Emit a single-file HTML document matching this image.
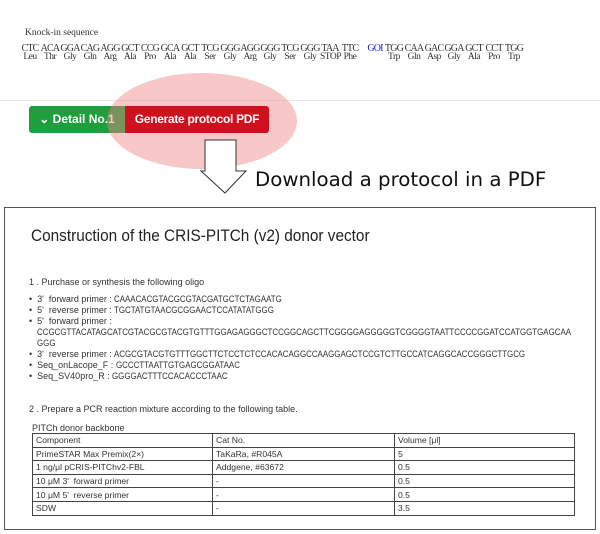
<!DOCTYPE html>
<html><head><meta charset="utf-8"><style>
body{margin:0;width:600px;height:534px;background:#fff;position:relative;overflow:hidden;font-family:"Liberation Sans",sans-serif}
.a{position:absolute;white-space:nowrap}
.sq{font-family:"Liberation Serif",serif;font-size:10px;color:#333;line-height:8px;letter-spacing:-0.8px}
.sq span{font-size:9.5px;letter-spacing:-0.5px}
.s{font-size:9px;color:#333}
.q{display:inline-block;transform-origin:left top;transform:scaleX(0.88)}
table{position:absolute;left:32px;top:433px;width:543px;border-collapse:collapse;font-size:8.6px;color:#333}
td{border:1px solid #444;height:12.6px;padding:0 0 0 3px;line-height:12px}
</style></head><body>
<div class="a" style="left:25px;top:28px;font-family:'Liberation Serif',serif;font-size:9.5px;color:#333">Knock-in sequence</div>
<div id="seq"></div>
<div class="a" style="left:0;top:100px;width:600px;height:1px;background:#e8e8e8"></div>
<div class="a" style="left:29px;top:106px;width:96px;height:27px;background:#1e9e3c;border-radius:3px 0 0 3px;color:#fff;font-size:12px;font-weight:bold;line-height:27px;text-align:center">⌄ Detail No.1</div>
<div class="a" style="left:107px;top:73px;width:190px;height:96px;border-radius:50%;background:rgba(240,130,130,0.45)"></div>
<div class="a" style="left:125px;top:106px;width:144px;height:27px;background:#d0101e;border-radius:0 3px 3px 0;color:#fff;font-size:12px;font-weight:bold;line-height:27px;text-align:center;letter-spacing:-0.3px">Generate protocol PDF</div>
<svg class="a" style="left:0;top:0" width="600" height="200"><path d="M205 140H236V171H246L225 193L201 171H205Z" fill="#fff" stroke="#333" stroke-width="1"/></svg>
<div class="a" style="left:255px;top:168px;font-family:'DejaVu Sans',sans-serif;font-size:19.8px;color:#111">Download a protocol in a PDF</div>
<div class="a" style="left:4px;top:207px;width:590px;height:321px;border:1px solid #555"></div>
<div class="a" style="left:31px;top:227px;font-size:16.5px;color:#222;transform-origin:left top;transform:scaleX(0.93)">Construction of the CRIS-PITCh (v2) donor vector</div>
<div class="a s" style="left:29px;top:277px">1 . Purchase or synthesis the following oligo</div>
<div class="a s" style="left:29px;top:294px">•&nbsp; 3'&nbsp; forward primer : <span class="q">CAAACACGTACGCGTACGATGCTCTAGAATG</span></div>
<div class="a s" style="left:29px;top:305px">•&nbsp; 5'&nbsp; reverse primer : <span class="q">TGCTATGTAACGCGGAACTCCATATATGGG</span></div>
<div class="a s" style="left:29px;top:316px">•&nbsp; 5'&nbsp; forward primer :</div>
<div class="a s" style="left:37px;top:327px"><span class="q">CCGCGTTACATAGCATCGTACGCGTACGTGTTTGGAGAGGGCTCCGGCAGCTTCGGGGAGGGGGTCGGGGTAATTCCCCGGATCCATGGTGAGCAA</span></div>
<div class="a s" style="left:37px;top:338px"><span class="q">GGG</span></div>
<div class="a s" style="left:29px;top:349px">•&nbsp; 3'&nbsp; reverse primer : <span class="q">ACGCGTACGTGTTTGGCTTCTCCTCTCCACACAGGCCAAGGAGCTCCGTCTTGCCATCAGGCACCGGGCTTGCG</span></div>
<div class="a s" style="left:29px;top:360px">•&nbsp; Seq_onLacope_F : <span class="q">GCCCTTAATTGTGAGCGGATAAC</span></div>
<div class="a s" style="left:29px;top:371px">•&nbsp; Seq_SV40pro_R : <span class="q">GGGGACTTTCCACACCCTAAC</span></div>
<div class="a s" style="left:29px;top:404px">2 . Prepare a PCR reaction mixture according to the following table.</div>
<div class="a s" style="left:32px;top:423px">PITCh donor backbone</div>
<table>
<tr><td style="width:176px">Component</td><td style="width:178px">Cat No.</td><td>Volume [μl]</td></tr>
<tr><td>PrimeSTAR Max Premix(2×)</td><td>TaKaRa, #R045A</td><td>5</td></tr>
<tr><td>1 ng/μl pCRIS-PITChv2-FBL</td><td>Addgene, #63672</td><td>0.5</td></tr>
<tr><td>10 μM 3'&nbsp; forward primer</td><td>-</td><td>0.5</td></tr>
<tr><td>10 μM 5'&nbsp; reverse primer</td><td>-</td><td>0.5</td></tr>
<tr><td>SDW</td><td>-</td><td>3.5</td></tr>
</table>
<script>
var c=[["CTC","Leu"],["ACA","Thr"],["GGA","Gly"],["CAG","Gln"],["AGG","Arg"],["GCT","Ala"],["CCG","Pro"],["GCA","Ala"],["GCT","Ala"],["TCG","Ser"],["GGG","Gly"],["AGG","Arg"],["GGG","Gly"],["TCG","Ser"],["GGG","Gly"],["TAA","STOP"],["TTC","Phe"]];
var d=[["TGG","Trp"],["CAA","Gln"],["GAC","Asp"],["GGA","Gly"],["GCT","Ala"],["CCT","Pro"],["TGG","Trp"]];
var h="";
function add(x,a,b,col){h+='<div class="a sq" style="left:'+x+'px;top:45px;width:20px;text-align:center;color:'+(col||'#333')+'">'+a+'<br><span>'+b+'</span></div>';}
c.forEach(function(v,i){add(20+i*20,v[0],v[1]);});
add(365,"GOI","","#2020d0");
d.forEach(function(v,i){add(384+i*20,v[0],v[1]);});
document.getElementById("seq").innerHTML=h;
</script>
</body></html>
